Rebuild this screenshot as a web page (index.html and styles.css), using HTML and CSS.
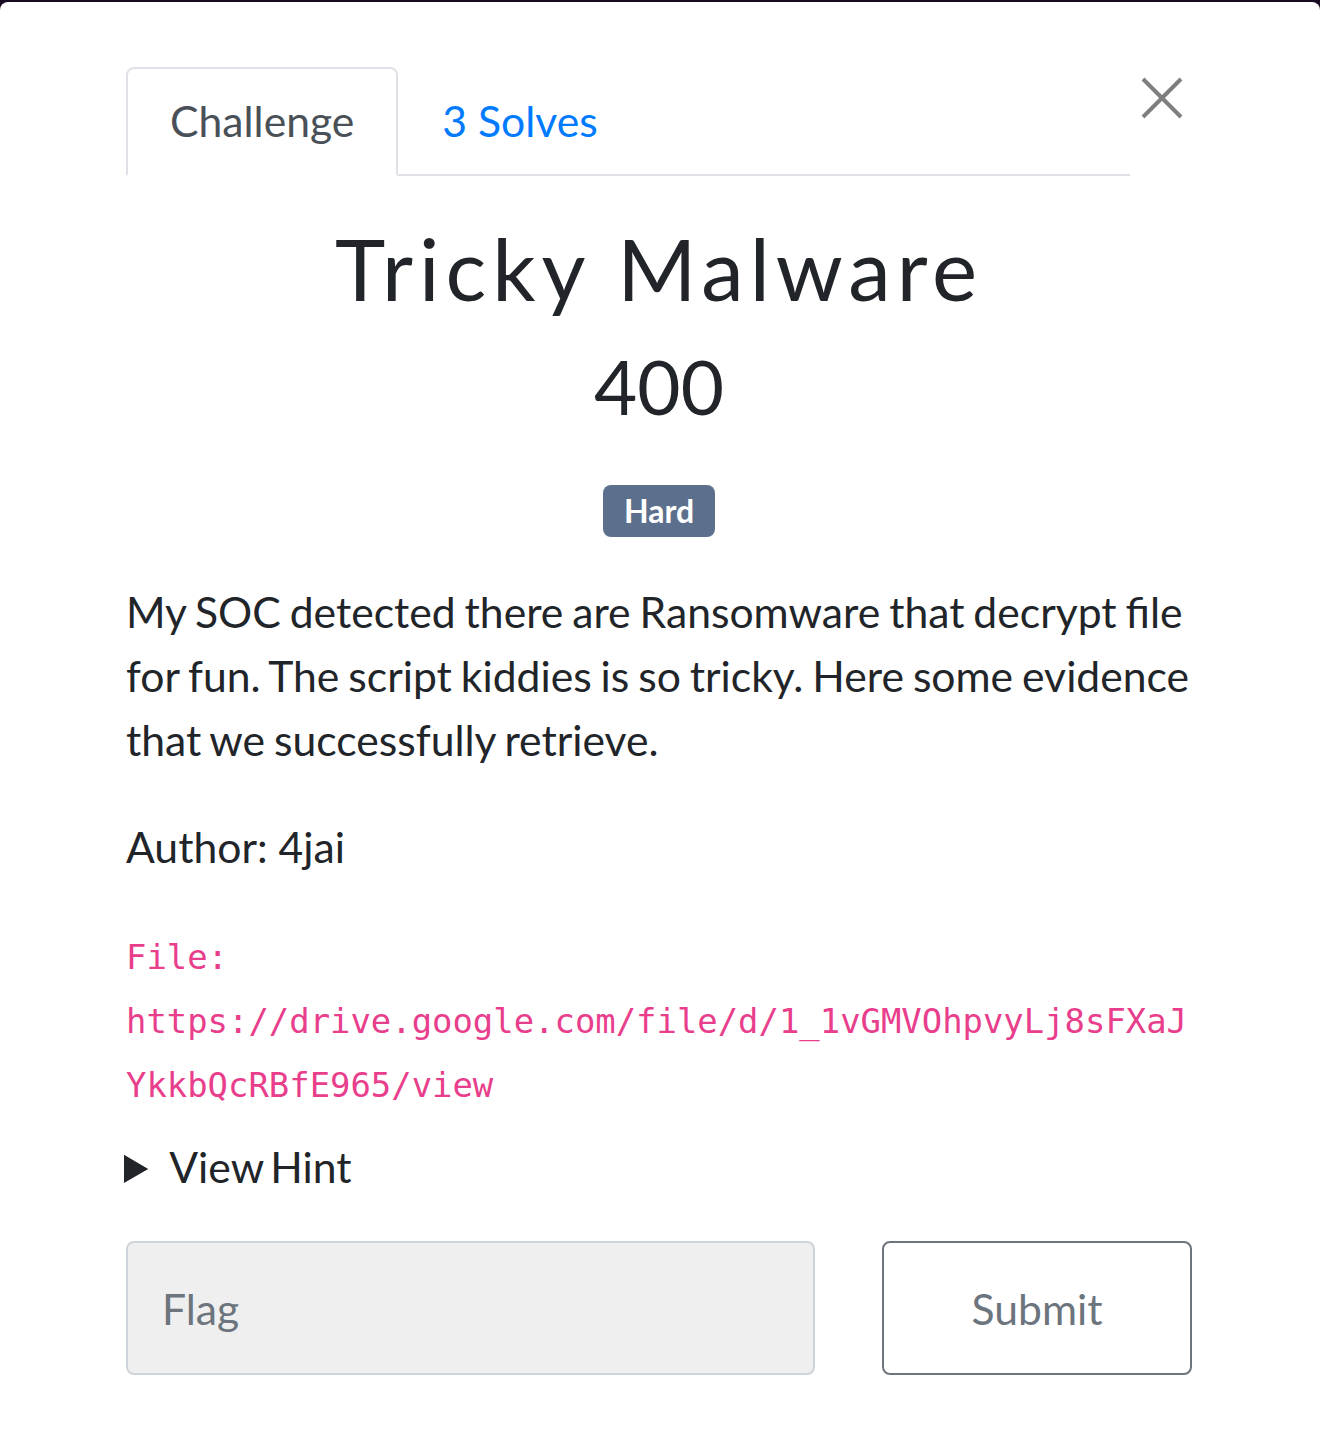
FILE: index.html
```html
<!DOCTYPE html>
<html lang="en">
<head>
<meta charset="utf-8">
<title>Tricky Malware</title>
<link rel="stylesheet" href="styles.css">
</head>
<body>
<div class="modal">
  <div class="modal-inner">
    <div class="header">
      <nav class="tabs">
        <a class="tab active">Challenge</a>
        <a class="tab link">3 Solves</a>
      </nav>
      <button class="close" aria-label="Close">
        <svg width="42" height="42" viewBox="0 0 42 42"><path d="M2 2 L40 40 M40 2 L2 40" stroke="#7f7f7f" stroke-width="4" fill="none"/></svg>
      </button>
    </div>
    <h2 class="title">Tricky Malware</h2>
    <h3 class="value">400</h3>
    <div class="badge-row"><span class="badge">Hard</span></div>
    <p class="desc first">My SOC detected there are Ransomware that decrypt file for fun. The script kiddies is so tricky. Here some evidence that we successfully retrieve.</p>
    <p class="desc">Author: 4jai</p>
    <p class="desc file"><code>File: https://drive.google.com/file/d/1_1vGMVOhpvyLj8sFXaJYkkbQcRBfE965/view</code></p>
    <details class="hint"><summary>View Hint</summary></details>
    <form class="flag-form">
      <input class="flag" type="text" placeholder="Flag">
      <button class="submit" type="button">Submit</button>
    </form>
  </div>
</div>
</body>
</html>
```
FILE: styles.css
```css
html, body {
  margin: 0;
  padding: 0;
}
body {
  background: #170a22;
  font-family: Lato, "Noto Sans", sans-serif;
  color: #212529;
}
.modal {
  margin-top: 2px;
  background: #fff;
  border-radius: 8px 8px 0 0;
  height: 1435px;
  padding-top: 65px;
  box-sizing: border-box;
}
.modal-inner {
  margin-left: 126px;
  width: 1066px;
  font-size: 42.67px;
  line-height: 64px;
}
.header {
  display: flex;
  align-items: flex-start;
}
.tabs {
  display: flex;
  width: 1004px;
  border-bottom: 2px solid #dee2e6;
}
.tab {
  display: block;
  padding: 20px 42px 21px;
  border: 2px solid transparent;
  border-radius: 8px 8px 0 0;
  margin-bottom: -2px;
  line-height: 64px;
}
.tab.active {
  border-color: #dee2e6 #dee2e6 #fff;
  color: #495057;
}
.tab.link {
  color: #007bff;
}
.close {
  margin: 10px 0 0 11px;
  padding: 0;
  border: 0;
  background: none;
  width: 42px;
  height: 42px;
  display: block;
}
.close svg { display: block; }
.title {
  margin: 41px 0 0;
  font-size: 85.33px;
  line-height: 1.2;
  font-weight: 400;
  text-align: center;
  letter-spacing: 6px;
  color: #212529;
}
.value {
  margin: 23px 0 0;
  font-size: 74.67px;
  line-height: 1.2;
  font-weight: 400;
  text-align: center;
  color: #212529;
}
.badge-row {
  text-align: center;
  margin-top: 53px;
  height: 52px;
}
.badge {
  display: inline-block;
  background: #5c708e;
  color: #fff;
  font-weight: 700;
  font-size: 32px;
  line-height: 32px;
  padding: 10px 21px;
  border-radius: 8px;
  vertical-align: top;
}
.desc {
  margin: 0 0 42.67px;
}
.desc.first {
  margin-top: 43px;
  word-spacing: -2px;
}
.file {
  margin-bottom: 22px;
  line-height: 64px;
}
.file code {
  font-family: "DejaVu Sans Mono", "Liberation Mono", monospace;
  font-size: 33.9px;
  line-height: 1;
  color: #e83e8c;
  overflow-wrap: break-word;
  word-wrap: break-word;
}
.hint summary {
  cursor: pointer;
  margin-left: -2px;
  word-spacing: -4px;
}
.flag-form {
  display: flex;
  justify-content: space-between;
  margin-top: 42px;
}
.flag {
  width: 689px;
  height: 134px;
  box-sizing: border-box;
  background: #efefef;
  border: 2px solid #ced4da;
  border-radius: 8px;
  padding: 0 34px;
  font-family: Lato, sans-serif;
  font-size: 42.67px;
  color: #495057;
}
.flag::placeholder {
  color: #6c757d;
}
.submit {
  width: 310px;
  height: 134px;
  box-sizing: border-box;
  background: #fff;
  border: 2px solid #6c757d;
  border-radius: 8px;
  font-family: Lato, sans-serif;
  font-size: 42.67px;
  color: #6c757d;
}
```
